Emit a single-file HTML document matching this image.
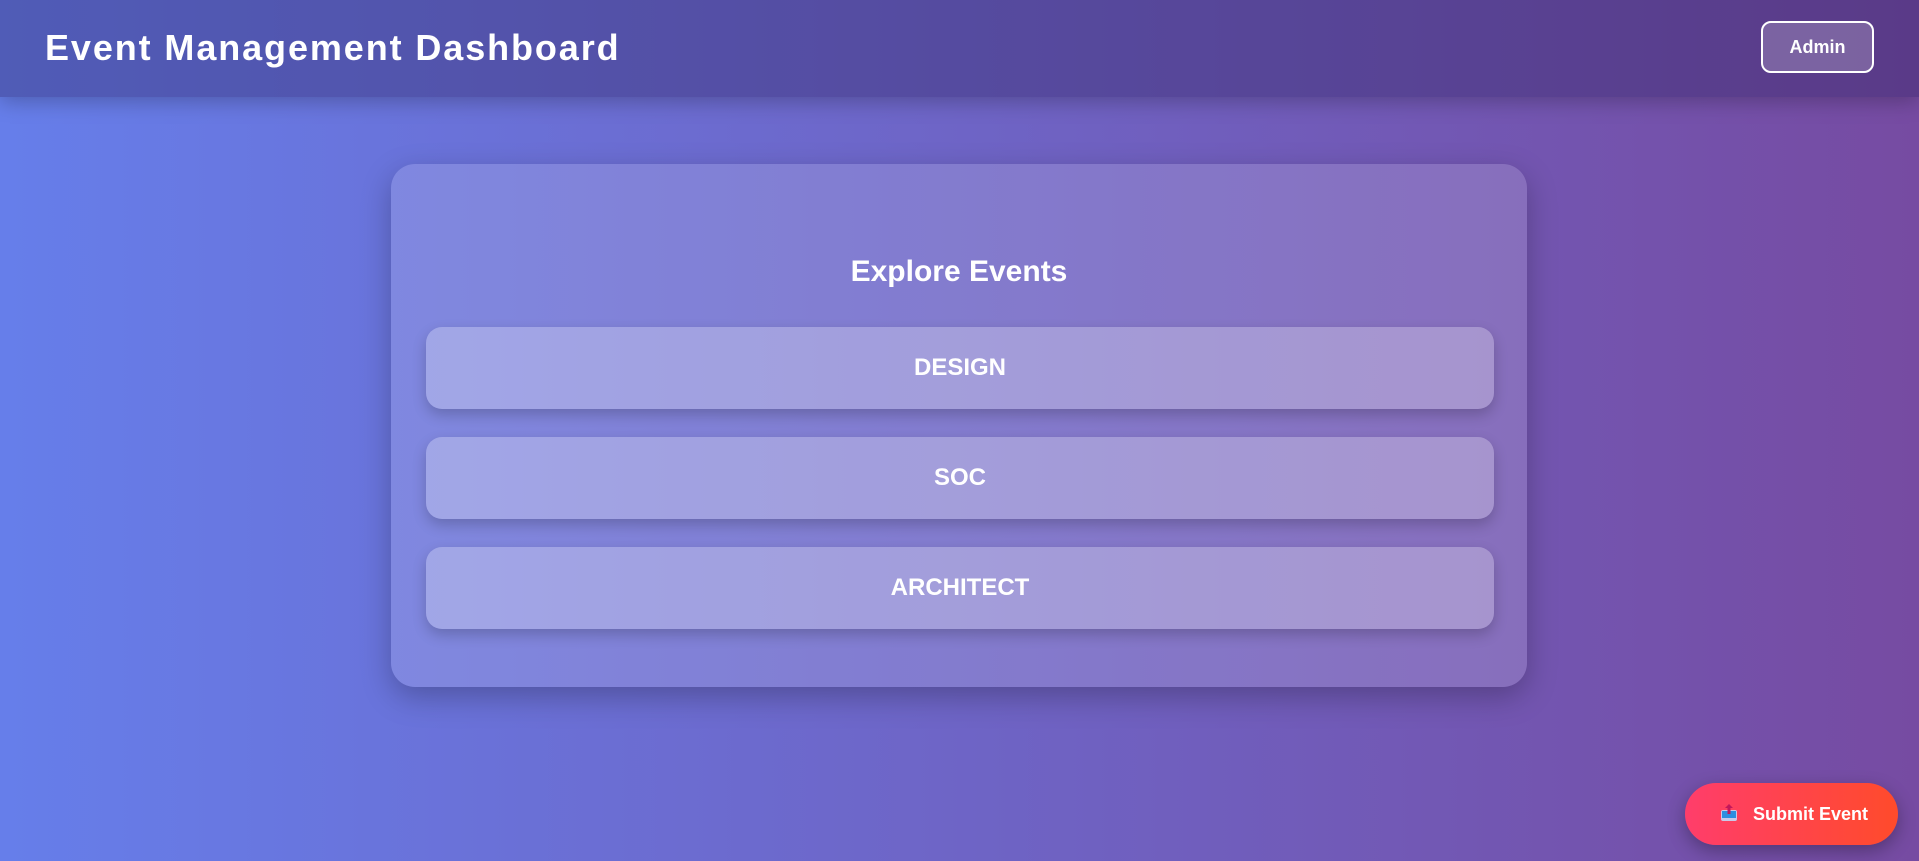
<!DOCTYPE html>
<html><head><meta charset="utf-8"><style>
html,body{margin:0;padding:0;}
body{width:1919px;height:861px;overflow:hidden;position:relative;background:linear-gradient(90deg,#667eea,#764ba2);font-family:"Liberation Sans",sans-serif;color:#fff;}
.hdr{position:absolute;left:0;top:0;width:1919px;height:97px;background:rgba(40,30,90,0.35);box-shadow:0 4px 20px rgba(0,0,0,0.25);}
.hdr h1{position:absolute;left:45px;top:26px;margin:0;font-size:36px;font-weight:bold;letter-spacing:1.9px;line-height:44px;}
.admin{position:absolute;left:1761px;top:21px;width:109px;height:48px;border:2px solid #fff;border-radius:10px;background:rgba(255,255,255,0.2);font-weight:bold;font-size:18px;text-align:center;line-height:48px;}
.card{position:absolute;left:391px;top:164px;width:1136px;height:523px;border-radius:24px;background:rgba(255,255,255,0.15);box-shadow:0 10px 30px rgba(0,0,0,0.25);}
.card h2{position:absolute;left:0;right:0;top:88px;margin:0;text-align:center;font-size:30px;font-weight:bold;line-height:40px;}
.btn{position:absolute;left:35px;width:1068px;height:82px;border-radius:16px;background:rgba(255,255,255,0.26);box-shadow:0 6px 14px rgba(0,0,0,0.2);text-align:center;line-height:82px;font-size:24px;font-weight:bold;}
.sub{position:absolute;left:1685px;top:783px;width:213px;height:62px;border-radius:31px;background:linear-gradient(90deg,#ff3d6b,#ff4b2b);box-shadow:0 6px 18px rgba(0,0,0,0.3);font-weight:bold;font-size:18px;line-height:62px;}
.sub span{position:absolute;left:68px;}
.ic{position:absolute;left:35px;top:20px;}
</style></head><body>
<div class="hdr"><h1>Event Management Dashboard</h1><div class="admin">Admin</div></div>
<div class="card"><h2>Explore Events</h2>
<div class="btn" style="top:163px">DESIGN</div>
<div class="btn" style="top:273px">SOC</div>
<div class="btn" style="top:383px">ARCHITECT</div>
</div>
<div class="sub"><svg class="ic" width="18" height="20" viewBox="0 0 18 20"><rect x="1" y="7" width="16" height="11" rx="2" fill="#c9c9e8"/><rect x="2" y="8" width="14" height="7" fill="#2d8fe0"/><path d="M9 1 L5 5 H7.5 V11 H10.5 V5 H13 Z" fill="#c2185b"/></svg><span>Submit Event</span></div>
</body></html>
